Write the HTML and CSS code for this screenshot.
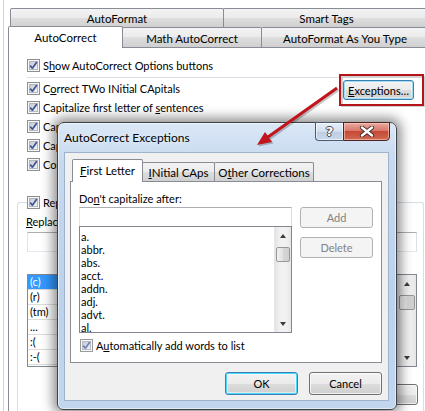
FILE: index.html
```html
<!DOCTYPE html>
<html>
<head>
<meta charset="utf-8">
<title>AutoCorrect Exceptions</title>
<link rel="stylesheet" href="styles.css">
</head>
<body>
<svg class="defs" width="0" height="0" aria-hidden="true">
  <defs>
    <linearGradient id="cbg" x1="0" y1="0" x2="1" y2="1">
      <stop offset="0" stop-color="#c2c7cf"/>
      <stop offset="1" stop-color="#f5f6f8"/>
    </linearGradient>
    <symbol id="cb" viewBox="0 0 13 13">
      <rect x="0.5" y="0.5" width="12" height="12" fill="#f6f6f6" stroke="#8e8f8f"/>
      <rect x="2.5" y="2.5" width="8" height="8" fill="url(#cbg)" stroke="#b3b8c0"/>
      <path d="M3.2 6.6 L5.4 9.2 L9.8 2.9" fill="none" stroke="#3f5596" stroke-width="1.7" stroke-linejoin="round"/>
    </symbol>
    <symbol id="cbl" viewBox="0 0 13 13">
      <rect x="0.5" y="0.5" width="12" height="12" fill="#f6f6f6" stroke="#9a9b9b"/>
      <rect x="2.5" y="2.5" width="8" height="8" fill="url(#cbg)" stroke="#b8bdc4"/>
      <path d="M3.2 6.6 L5.4 9.2 L9.8 2.9" fill="none" stroke="#6d82b6" stroke-width="1.7" stroke-linejoin="round"/>
    </symbol>
  </defs>
</svg>

<div class="win">
  <div class="tabs">
    <div class="tabrow row1">
      <div class="tab t-af">AutoFormat</div>
      <div class="tab t-st">Smart Tags</div>
    </div>
    <div class="tabrow row2">
      <div class="tab sel t-ac">AutoCorrect</div>
      <div class="tab t-mac">Math AutoCorrect</div>
      <div class="tab t-afy">AutoFormat As You Type</div>
    </div>
  </div>
  <div class="panel">
    <div class="opts">
      <div class="opt"><svg class="cb"><use href="#cb"/></svg><span>S<u>h</u>ow AutoCorrect Options buttons</span></div>
      <div class="sep"></div>
      <div class="optgrid">
        <div class="optcol">
          <div class="opt"><svg class="cb"><use href="#cb"/></svg><span>C<u>o</u>rrect TWo INitial CApitals</span></div>
          <div class="opt"><svg class="cb"><use href="#cb"/></svg><span>Capitalize first letter of <u>s</u>entences</span></div>
          <div class="opt"><svg class="cb"><use href="#cb"/></svg><span>Capitalize first letter of <u>t</u>able cells</span></div>
          <div class="opt"><svg class="cb"><use href="#cb"/></svg><span>Capitalize <u>n</u>ames of days</span></div>
          <div class="opt"><svg class="cb"><use href="#cb"/></svg><span>Correct accidental usage of cAPS <u>L</u>OCK key</span></div>
        </div>
        <button class="btn exc"><u>E</u>xceptions…</button>
      </div>
    </div>
    <div class="group">
      <div class="glegend"><svg class="cb"><use href="#cb"/></svg><span>Replace <u>t</u>ext as you type</span></div>
      <div class="glabels">
        <span class="lrep"><u>R</u>eplace:</span>
        <span class="lwith"><u>W</u>ith:</span>
      </div>
      <div class="ginputs">
        <div class="tbox rep"></div>
        <div class="tbox with"></div>
      </div>
      <div class="glist">
        <div class="grows">
          <div class="grow selrow"><span class="c1">(c)</span><span class="c2">©</span></div>
          <div class="grow"><span class="c1">(r)</span><span class="c2">®</span></div>
          <div class="grow"><span class="c1">(tm)</span><span class="c2">™</span></div>
          <div class="grow"><span class="c1">...</span><span class="c2">…</span></div>
          <div class="grow"><span class="c1">:(</span><span class="c2">☹</span></div>
          <div class="grow"><span class="c1">:-(</span><span class="c2">☹</span></div>
        </div>
        <div class="sbar gsbar">
          <div class="sarrow up"></div>
          <div class="sthumb"></div>
          <div class="sfill"></div>
          <div class="sarrow down"></div>
        </div>
      </div>
      <div class="gbtnrow"><button class="btn gadd">Add</button></div>
    </div>
  </div>
</div>

<div class="dlg">
  <div class="titlebar">
    <span class="ttext">AutoCorrect Exceptions</span>
    <div class="tbtns">
      <div class="hbtn">?</div>
      <div class="xbtn">
        <svg width="16" height="11" viewBox="0 0 16 11">
          <path d="M3 1.5 L13 9.5 M13 1.5 L3 9.5" stroke="#3b2a28" stroke-width="4.2" stroke-linecap="round"/>
          <path d="M3 1.5 L13 9.5 M13 1.5 L3 9.5" stroke="#ffffff" stroke-width="2.4" stroke-linecap="round"/>
        </svg>
      </div>
    </div>
  </div>
  <div class="client">
    <div class="dtabs">
      <div class="dtab dsel"><u>F</u>irst Letter</div>
      <div class="dtab dinit"><u>I</u>Nitial CAps</div>
      <div class="dtab dother">O<u>t</u>her Corrections</div>
    </div>
    <div class="dpanel">
      <div class="dlabel">Do<u>n</u>'t capitalize after:</div>
      <div class="dmain">
        <div class="dleft">
          <div class="tbox dinput"></div>
          <div class="dlist">
            <div class="ditems">
              <div>a.</div>
              <div>abbr.</div>
              <div>abs.</div>
              <div>acct.</div>
              <div>addn.</div>
              <div>adj.</div>
              <div>advt.</div>
              <div>al.</div>
            </div>
            <div class="sbar dsbar">
              <div class="sarrow up"></div>
              <div class="sthumb"></div>
              <div class="sfill"></div>
              <div class="sarrow down"></div>
            </div>
          </div>
        </div>
        <div class="dbtns">
          <button class="btn dis">Add</button>
          <button class="btn dis">Delete</button>
        </div>
      </div>
      <div class="opt dauto"><svg class="cb"><use href="#cbl"/></svg><span>A<u>u</u>tomatically add words to list</span></div>
    </div>
    <div class="okrow">
      <button class="btn def">OK</button>
      <button class="btn">Cancel</button>
    </div>
  </div>
</div>

<svg class="overlay" width="425" height="411" viewBox="0 0 425 411" aria-hidden="true">
  <rect x="341" y="76" width="82" height="29" fill="none" stroke="rgba(0,0,0,0.18)" stroke-width="2" transform="translate(1,1)"/>
  <rect x="340" y="75" width="83" height="30" fill="none" stroke="#b5121b" stroke-width="2"/>
  <g transform="translate(1.5,1.5)" opacity="0.22">
    <line x1="337" y1="88" x2="268" y2="137" stroke="#000" stroke-width="3"/>
    <polygon points="257,145 272,142 265,132" fill="#000"/>
  </g>
  <line x1="337" y1="88" x2="268" y2="137" stroke="#c1141c" stroke-width="3"/>
  <polygon points="257,145 272,142 265,132" fill="#c1141c"/>
</svg>
</body>
</html>
```

FILE: styles.css
```css
* { box-sizing: border-box; }
html, body { margin: 0; padding: 0; }
body {
  width: 425px;
  height: 411px;
  overflow: hidden;
  position: relative;
  background: #ffffff;
  font-family: Lato, "Liberation Sans", sans-serif;
  font-size: 11px;
  color: #000;
}
u { text-decoration: underline; text-underline-offset: 1px; }
.defs { display: block; width: 0; height: 0; }

/* background window */
.win {
  height: 411px;
  margin-left: 3px;
  border-left: 1px solid #cdd4dc;
  padding: 8px 0 0 4px;
  display: flex;
  flex-direction: column;
  overflow: hidden;
}
.tabrow { display: flex; white-space: nowrap; }
.row1 { margin-left: 2px; height: 19px; }
.row2 { height: 20px; }
.tab {
  flex: none;
  border: 1px solid #898c95;
  border-bottom: none;
  border-radius: 2px 2px 0 0;
  background: linear-gradient(#f3f3f3, #ebebeb 50%, #dedede 50%, #d0d0d0);
  display: flex;
  align-items: center;
  justify-content: center;
  margin-right: -1px;
  padding-top: 1px;
  font-size: 11.5px;
}
.t-af { width: 214px; }
.t-st { width: 207px; }
.t-ac { width: 115px; }
.t-mac { width: 140px; }
.t-afy { width: 168px; }
.tab.sel {
  height: 22px;
  margin-top: -1px;
  background: #ffffff;
  position: relative;
  z-index: 2;
  padding-top: 0;
  padding-bottom: 1px;
}
.panel {
  flex: 1;
  border-top: 1px solid #898c95;
  border-left: 1px solid #898c95;
  background: #ffffff;
  padding: 8px 1px 0 8px;
  display: flex;
  flex-direction: column;
}
.opts { margin: 0 10px; }
.opt {
  display: flex;
  align-items: center;
  gap: 3px;
  height: 19px;
  white-space: nowrap;
}
.cb { width: 13px; height: 13px; flex: none; display: block; }
.sep { height: 1px; width: 313px; background: #d9dee4; margin: 2px 0 1px; }
.optgrid { display: flex; justify-content: space-between; align-items: flex-start; }

.btn {
  font: inherit;
  color: #000;
  border: 1px solid #707070;
  border-radius: 3px;
  background: linear-gradient(#f2f2f2, #ebebeb 50%, #dddddd 50%, #cfcfcf);
  box-shadow: inset 0 0 0 1px rgba(255,255,255,0.7);
  padding: 0;
  display: flex;
  align-items: center;
  justify-content: center;
  white-space: nowrap;
}
.exc {
  width: 71px;
  height: 20px;
  margin-top: 1px;
  border-color: #3c7fb1;
  box-shadow: inset 0 0 0 1px #9fdcf5, inset 0 0 0 2px rgba(255,255,255,0.4);
}

.group {
  margin-top: 28px;
  flex: 1;
  border: 1px solid #d5dfe5;
  border-bottom: none;
  border-radius: 3px 3px 0 0;
  padding: 0 6px 0 9px;
  display: flex;
  flex-direction: column;
}
.glegend {
  display: flex;
  align-items: center;
  gap: 3px;
  height: 13px;
  margin-top: -7px;
  width: max-content;
  padding-right: 3px;
  background: #fff;
  white-space: nowrap;
}
.glabels { display: flex; height: 14px; line-height: 14px; margin-top: 6px; }
.lrep { margin-left: -1px; width: 124px; }
.ginputs { display: flex; gap: 10px; margin-top: 3px; height: 20px; }
.tbox {
  height: 20px;
  border: 1px solid #abadb3;
  border-right-color: #dbdfe6;
  border-bottom-color: #e3e9ef;
  border-left-color: #e2e3ea;
  background: #fff;
}
.rep { width: 113px; }
.with { flex: 1; }
.glist {
  margin-top: 22px;
  height: 93px;
  border: 1px solid #828790;
  display: flex;
  background: #fff;
}
.grows { flex: 1; }
.grow {
  height: 15px;
  border-bottom: 1px solid #dcdcdc;
  display: flex;
  align-items: center;
  line-height: 14px;
}
.grow .c1 { width: 82px; padding-left: 2px; }
.grow .c2 { padding-left: 2px; }
.selrow { background: #3399ff; color: #fff; }
.gbtnrow { display: flex; justify-content: flex-end; margin-top: 17px; }
.gadd { width: 76px; height: 21px; margin-right: -1px; }

/* scrollbars */
.sbar {
  flex: none;
  display: flex;
  flex-direction: column;
  align-items: center;
  background: linear-gradient(to right, #e3e3e3, #f1f1f1 30%, #f1f1f1 70%, #e6e6e6);
  border-left: 1px solid #e6e6e6;
}
.gsbar { width: 19px; }
.dsbar { width: 17px; }
.sarrow { height: 17px; width: 100%; display: flex; align-items: center; justify-content: center; }
.sarrow.up::before {
  content: "";
  border-left: 3.5px solid transparent;
  border-right: 3.5px solid transparent;
  border-bottom: 4px solid #3b3b3b;
}
.sarrow.down::before {
  content: "";
  border-left: 3.5px solid transparent;
  border-right: 3.5px solid transparent;
  border-top: 4px solid #3b3b3b;
}
.sthumb {
  margin-top: 3px;
  width: calc(100% - 2px);
  height: 15px;
  border: 1px solid #979797;
  border-radius: 2px;
  background: linear-gradient(to right, #f0f0f0, #e2e2e2 50%, #d6d6d6 50%, #d0d0d0);
}
.sfill { flex: 1; }

/* dialog */
.dlg {
  position: absolute;
  left: 57px;
  top: 122px;
  width: 340px;
  height: 288px;
  z-index: 5;
  border: 1px solid #3d4249;
  border-radius: 7px 7px 6px 6px;
  background: linear-gradient(#dae7f6, #c6d9ef 40px, #bcd2ec 60%, #c2d6ee);
  box-shadow: inset 0 0 0 1px rgba(255,255,255,0.55), 0 0 12px 4px rgba(0,0,0,0.45);
  padding: 0 7px 8px 6px;
  display: flex;
  flex-direction: column;
}
.titlebar { height: 29px; flex: none; display: flex; align-items: center; }
.ttext { white-space: nowrap; color: #000; font-size: 12px; text-shadow: 0 0 6px rgba(255,255,255,0.9); }
.tbtns { margin-left: auto; align-self: flex-start; display: flex; margin-top: -1px; margin-right: -1px; }
.hbtn {
  width: 28px;
  height: 19px;
  border: 1px solid #4c5a70;
  border-right: none;
  border-radius: 0 0 0 4px;
  background: linear-gradient(#e6eef8, #d3dff0 50%, #bccde3 50%, #c9d8ea);
  box-shadow: inset 0 0 0 1px rgba(255,255,255,0.6);
  display: flex;
  align-items: center;
  justify-content: center;
  font-family: "DejaVu Sans", sans-serif;
  font-weight: bold;
  font-size: 13px;
  color: #fff;
  text-shadow: -1px 0 #3d4656, 1px 0 #3d4656, 0 -1px #3d4656, 0 1px #3d4656;
}
.xbtn {
  width: 47px;
  height: 19px;
  border: 1px solid #4b2421;
  border-radius: 0 0 4px 0;
  background: linear-gradient(#e9a99f, #d8786a 45%, #c64a36 50%, #cf6a52);
  box-shadow: inset 0 0 0 1px rgba(255,215,205,0.55);
  display: flex;
  align-items: center;
  justify-content: center;
}
.client {
  flex: 1;
  border: 1px solid #9fb2cb;
  background: #f0f0f0;
  padding: 6px 6px 0 5px;
  display: flex;
  flex-direction: column;
}
.dtabs { display: flex; height: 22px; align-items: flex-end; margin-left: 2px; white-space: nowrap; }
.dtab {
  height: 19px;
  border: 1px solid #898c95;
  border-bottom: none;
  border-radius: 2px 2px 0 0;
  background: linear-gradient(#f3f3f3, #ebebeb 50%, #dedede 50%, #d0d0d0);
  display: flex;
  align-items: center;
  justify-content: center;
  margin-right: -1px;
  font-size: 11.5px;
}
.dtab.dsel {
  width: 71px;
  height: 23px;
  margin-bottom: -1px;
  background: #ffffff;
  position: relative;
  z-index: 2;
  padding-bottom: 2px;
}
.dtab.dinit { width: 73px; }
.dtab.dother { width: 100px; }
.dpanel {
  height: 182px;
  flex: none;
  border: 1px solid #898c95;
  background: #ffffff;
  padding: 9px 8px 0 8px;
}
.dlabel { height: 15px; line-height: 15px; white-space: nowrap; }
.dmain { display: flex; gap: 8px; margin-top: 1px; }
.dleft { width: 213px; display: flex; flex-direction: column; }
.dinput { height: 20px; }
.dlist {
  margin-top: -1px;
  height: 107px;
  border: 1px solid #828790;
  display: flex;
  background: #fff;
}
.ditems { flex: 1; padding: 3px 0 0 1px; line-height: 13px; }
.dbtns { display: flex; flex-direction: column; gap: 9px; }
.dbtns .btn { width: 73px; height: 21px; }
.btn.dis {
  color: #838383;
  border-color: #adb2b5;
  background: #f4f4f4;
  box-shadow: none;
}
.dauto { margin-top: 5px; height: 15px; margin-left: 1px; }
.okrow { display: flex; justify-content: flex-end; gap: 11px; margin-top: 9px; }
.okrow .btn { width: 73px; height: 23px; }
.btn.def {
  border-color: #3c7fb1;
  box-shadow: inset 0 0 0 1px #48d8fb, inset 0 0 0 2px rgba(255,255,255,0.5);
}

.overlay {
  position: absolute;
  left: 0;
  top: 0;
  z-index: 10;
  pointer-events: none;
}
```
